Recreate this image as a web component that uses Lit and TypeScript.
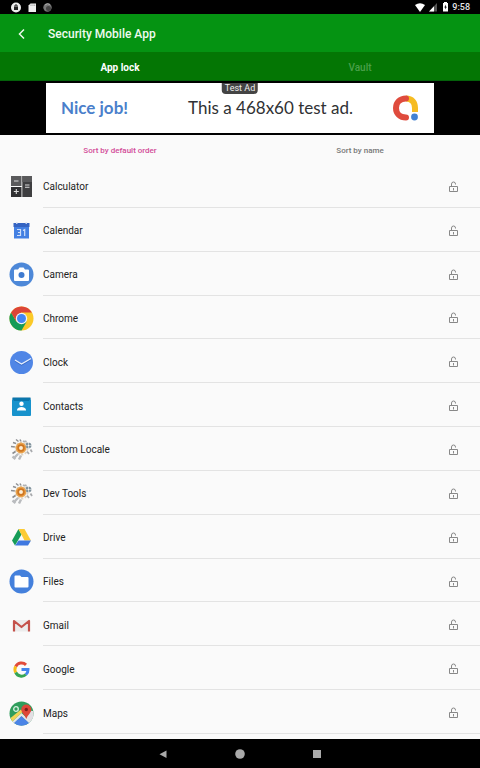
import { LitElement, html, svg, css } from "lit";
import { customElement, property, state } from "lit/decorators.js";
import { classMap } from "lit/directives/class-map.js";

const gears = svg`
  <g fill="none">
    <path d="M4 5.500 7 6.500M7 2.500l2.500 2M11 2.500l1 2M2 9.500l4 .5" stroke="#8d8f92" stroke-width="1.500"/>
    <path d="M14 4c1.500 1 2 1 3.500 0M17 6l2 1" stroke="#b0b2b4" stroke-width="1.700"/>
    <circle cx="12.500" cy="11.500" r="6" stroke="#dcd4c6" stroke-width="2" stroke-dasharray="2.200 1.500"/>
    <circle cx="12" cy="11" r="3.400" stroke="#eaa24c" stroke-width="4"/>
    <circle cx="12" cy="11" r="3" stroke="#cc7420" stroke-width="1.400"/>
    <circle cx="19.500" cy="8.500" r="2" stroke="#7f929c" stroke-width="2.200" stroke-dasharray="2.200 .7"/>
    <path d="M21.500 12.500l1.500 2.500M18 14.500l2 2.500" stroke="#a9abae" stroke-width="1.800"/>
    <path d="M9 17 5.500 20.500M3.500 19.500l3 2.500M12 18.500l-2 4" stroke="#b9bbbe" stroke-width="2.400"/>
    <path d="M6.500 14.500l-3 2" stroke="#8b8d90" stroke-width="1.600"/>
  </g>
  <circle cx="12" cy="11" r="1.700" fill="#fbeed8"/>`;

const icons = {
  Calculator: svg`
    <path fill="#5a5a5c" d="M2 2h10.500v10H2z"/><path fill="#303032" d="M2 13h10.500v10H2z"/>
    <path fill="#3e3e40" d="M13.300 2H23v21h-9.700z"/><path fill="#59595b" d="M13.300 2H23v6h-9.700z"/>
    <path stroke="#dcdcdc" stroke-width="1.100" d="M5 7h4.500M4.800 17.500h5M7.300 15v5M16 11h4.500M16 13.300h4.500"/>`,
  Calendar: svg`
    <path fill="#4480e2" d="M5 8h15v12.500H5z"/><path fill="#3564c2" d="M4.500 5h16v4h-16z"/>
    <path fill="#bfd0ef" d="M7 4.500h1.500V6H7zM16.500 4.500H18V6h-1.500z"/>
    <path fill="none" stroke="#cfdffa" stroke-width="1.200" d="M8 11.500h3.500v6H8M9 14.500h2.500M14 12.500l1.700-1v6.500"/>`,
  Camera: svg`
    <circle cx="12.500" cy="12.500" r="12" fill="#4d88d8"/>
    <path fill="#fff" d="M6 7.500h3l1.500-2h4l1.500 2h3q1 0 1 1V18q0 1-1 1H6q-1 0-1-1V8.500q0-1 1-1z"/>
    <circle cx="12.500" cy="13" r="3" fill="#3f7bd0"/>`,
  Chrome: svg`
    <circle cx="12.500" cy="12.500" r="12" fill="#fbc928"/>
    <path fill="#159b58" d="M2.100 6.500a12 12 0 0 0 10.400 18l5.200-9-10.400 0z"/>
    <path fill="#dc4437" d="M2.100 6.500a12 12 0 0 1 20.800 0H12.500L7.300 15.500z"/>
    <circle cx="12.500" cy="12.500" r="5.700" fill="#f4f4f4"/><circle cx="12.500" cy="12.500" r="4.500" fill="#4285f4"/>`,
  Clock: svg`
    <circle cx="12.500" cy="12.500" r="11.500" fill="#5086e6"/>
    <path fill="none" stroke="#3a6bc6" stroke-width="1.400" d="M6 11l6.500 4L22 9.500"/>
    <path fill="none" stroke="#e6effc" stroke-width="1.400" d="M6 10l6.500 4L22 8.500"/>`,
  Contacts: svg`
    <path fill="#0c6fa5" d="M3.500 3.500h18v4h-18z"/>
    <path fill="#1792cc" d="M3 5.500h19v15.500q0 1-1 1H4q-1 0-1-1z"/>
    <path fill="#0b76ac" d="M3.500 4h18l-1.500 3H5z"/>
    <circle cx="12.500" cy="9.800" r="2.200" fill="#fff"/><path fill="#fff" d="M8 16.500v-1Q9 13 12.500 13t4.500 2.500v1z"/>`,
  "Custom Locale": gears,
  "Dev Tools": gears,
  Drive: svg`
    <path fill="#169c58" d="M9.500 4 3 15.500l3 5 6.500-11z"/>
    <path fill="#fccb35" d="M9.500 4h6L22 15.500h-6.500z"/>
    <path fill="#3f78e0" d="M9.500 15.500H22l-3 5H6.200z"/>`,
  Files: svg`
    <circle cx="12.500" cy="12.500" r="12" fill="#4480dc"/>
    <path fill="#fff" d="M6.500 6.500h4.500l1.500 1.500h6q1 0 1 1v8.500q0 1-1 1h-12q-1 0-1-1v-10q0-1 1-1z"/>`,
  Gmail: svg`
    <path fill="#ececec" d="M5 7h15v11.500H5z"/>
    <path fill="none" stroke="#c4524b" stroke-width="2.200" stroke-linejoin="round" d="M5 18.500V8l7.500 6L20 8v10.500"/>`,
  Google: svg`
    <g fill="none" stroke-width="3">
      <path stroke="#e14b3b" d="M6.700 9.500A6.500 6.500 0 0 1 17 7.800"/>
      <path stroke="#f7bd19" d="M6.700 9.500a6.500 6.500 0 0 0 0 6"/>
      <path stroke="#35a554" d="M6.700 15.500a6.500 6.500 0 0 0 10.200 2"/>
      <path stroke="#4384ee" d="M12.500 12.500h6.500a6.500 6.500 0 0 1-2.100 5"/>
    </g>`,
  Maps: svg`
    <circle cx="12.500" cy="12.500" r="12" fill="#2f9d5c"/>
    <path fill="#e3dfe4" d="M14 9l10.200 1a12 12 0 0 1-4.500 12.100z"/>
    <path fill="#f2d355" d="M1.500 17 12 8.500l2 2L3.500 20.500z"/>
    <path fill="#e6e6e4" d="M3.500 20.500 12.500 12l9 8.500-2 1.500-7-6.500-7.500 7z"/>
    <path fill="#4b84e6" d="M5 22l7.500-7 7.500 7a12 12 0 0 1-15 0z"/>
    <circle cx="7" cy="8" r="2.300" fill="none" stroke="#d7efdf" stroke-width="1.300"/>
    <path fill="#dd4638" d="M17.300 3.500a5 5 0 0 1 5 5c0 3.500-3.500 5-5 9.500-1.500-4.500-5-6-5-9.500a5 5 0 0 1 5-5z"/>
    <circle cx="17.300" cy="8.500" r="1.700" fill="#7c1f1a"/>`,
};

@customElement("app-row")
class AppRow extends LitElement {
  @property() name: keyof typeof icons = "Calculator";
  @state() private locked = false;

  static styles = css`
    :host { display: flex; align-items: stretch; padding-left: 9px; gap: 9px; min-height: 40px; }
    .icon { width: 25px; height: 25px; margin-top: 2px; align-self: center; flex: none; }
    .body { flex: 1; display: flex; align-items: center; justify-content: space-between; border-bottom: 1px solid #e3e3e3; padding-right: 20px; padding-top: 4px; }
    .name { font-size: 10px; line-height: 14px; color: #222; }
    button { display: flex; padding: 0; border: 0; background: none; cursor: pointer; }
    .lock { width: 13px; height: 13px; }
  `;

  render() {
    return html`
      <svg class="icon" viewBox="0 0 25 25" aria-hidden="true">${icons[this.name]}</svg>
      <div class="body">
        <span class="name">${this.name}</span>
        <button aria-label="Lock ${this.name}" aria-pressed=${this.locked} @click=${() => (this.locked = !this.locked)}>
          <svg class="lock" viewBox="0 0 13 13" fill="none" stroke="#888" stroke-width="1">
            <path d="M2.500 5.500h8v5h-8zM6.500 7v2.500" />
            <path d=${this.locked ? "M4.500 5.500V3a2 2 0 0 1 4 0v2.500" : "M4.500 5.500V3a2 2 0 0 1 4 0v.5"} />
          </svg>
        </button>
      </div>`;
  }
}

@customElement("app-root")
class AppRoot extends LitElement {
  @state() private tab = 0;
  @state() private sort = 0;

  static styles = css`
    :host { display: flex; flex-direction: column; min-height: 100vh; background: #fafafa; font-family: Roboto, "Liberation Sans", sans-serif; }
    button { border: 0; padding: 0; background: none; font: inherit; cursor: pointer; }
    svg { display: block; }
    .status { height: 14px; background: #000; display: flex; align-items: center; justify-content: space-between; padding: 0 10px; color: #e8e8e8; font-size: 9px; line-height: 14px; font-weight: 500; }
    .group { display: flex; align-items: center; }
    .left { gap: 4px; }
    .right { gap: 2px; }
    .s12 { width: 12px; height: 12px; }
    .s10 { width: 10px; height: 10px; }
    .bar { height: 38px; background: #059312; display: flex; align-items: center; padding: 2px 14px 0; gap: 18px; color: #effaef; }
    .bar, .status, .tabs, .sorts, .nav, .ad { flex: none; box-sizing: border-box; }
    .back svg { width: 16px; height: 16px; }
    h1 { margin: 0; font-size: 12px; line-height: 16px; font-weight: 500; }
    .tabs, .sorts { height: 29px; display: grid; grid-template-columns: 1fr 1fr; }
    .tabs { background: #047604; font-size: 10px; font-weight: 500; padding-top: 2px; border-bottom: 1px solid #04600a; }
    .tab { color: #4aa04a; }
    .tab.on { color: #fff; font-weight: 700; }
    .ad { background: #000; padding: 2px 0; display: flex; justify-content: center; height: 54px; }
    .banner { position: relative; width: 388px; max-width: 100%; background: #fff; display: flex; align-items: center; box-sizing: border-box; padding: 0 14px 0 15px; gap: 39px; text-decoration: none; font-family: Lato, Roboto, sans-serif; font-size: 17px; line-height: 24px; color: #303134; }
    .nice { flex: 1; color: #4a7fcb; font-weight: 700; }
    .mark { width: 28px; height: 28px; }
    .badge { position: absolute; top: 0; left: 50%; transform: translateX(-50%); padding: 0 3px; border-radius: 0 0 4px 4px; background: #444; color: #eee; font: 9px/11px Roboto, sans-serif; white-space: nowrap; }
    .sorts { padding-top: 2px; }
    .sort { color: #777; font-size: 8px; font-weight: 500; }
    .sort.on { color: #d24a98; }
    .apps { flex: 1; display: grid; grid-auto-rows: 1fr; padding-bottom: 5px; }
    .nav { height: 29px; background: #000; display: flex; align-items: center; justify-content: center; gap: 65px; }
    .nav svg { width: 12px; height: 12px; fill: #aaa; }
  `;

  render() {
    return html`
      <div class="status">
        <div class="group left">
          <svg class="s12" viewBox="0 0 12 12"><circle cx="6" cy="6.500" r="5" fill="#eee"/><path fill="#222" d="M4 5.500h4V9H4z"/><path fill="none" stroke="#222" d="M5 5.500V4h2v1.500"/></svg>
          <svg class="s12" viewBox="0 0 12 12"><path fill="#eee" d="M4.500 2.500H10V11H2.500V4.500z"/><path stroke="#777" d="M5 3.500V5M7 3.500V5M8.700 3.500V5" stroke-width=".6"/></svg>
          <svg class="s12" viewBox="0 0 12 12"><circle cx="5.500" cy="6.500" r="4.200" fill="#777"/><circle cx="6.500" cy="7.500" r="2.500" fill="#444"/><path fill="none" stroke="#aaa" d="M3 4a4 4 0 0 1 5-.5"/></svg>
        </div>
        <div class="group right">
          <svg class="s12" viewBox="0 0 12 12"><path fill="#fff" d="M1 4q5-3.500 10 0l-5 7z"/></svg>
          <svg class="s10" viewBox="0 0 10 10"><path fill="#555" d="M9 1v8.500H1z"/><path fill="#fff" d="M6 4.200v5.300H1z"/></svg>
          <svg class="s10" viewBox="0 0 10 10"><path fill="#fff" d="M4 0h3v1h1v8.500H3V1h1z"/><path fill="#000" d="M5.800 2.500 4.300 5.500h1v2L6.800 4.700h-1z"/></svg>
          <span>9:58</span>
        </div>
      </div>
      <header class="bar">
        <button class="back" aria-label="Back"><svg viewBox="0 0 16 16"><path fill="none" stroke="#effaef" stroke-width="1.500" d="M10 3.500 5.500 8l4.500 4.500"/></svg></button>
        <h1>Security Mobile App</h1>
      </header>
      <div class="tabs">
        ${["App lock", "Vault"].map((t, i) => html`<button class=${classMap({ tab: true, on: this.tab === i })} @click=${() => (this.tab = i)}>${t}</button>`)}
      </div>
      <div class="ad">
        <a class="banner" href="#">
          <span class="badge">Test Ad</span>
          <span class="nice">Nice job!</span>
          <span>This a 468x60 test ad.</span>
          <svg class="mark" viewBox="0 0 28 28" fill="none" stroke-width="6" stroke-linecap="round">
            <path stroke="#f6bc22" d="M14 4.500c6 0 9 4 9 9.500v4" stroke-linecap="butt"/>
            <path stroke="#df4b3d" d="M14 4.500c-6 0-10 4-10 9.500s4 9.500 10 9.500"/>
            <circle cx="22.500" cy="23" r="3.400" fill="#4382d2"/>
          </svg>
        </a>
      </div>
      <div class="sorts">
        ${["Sort by default order", "Sort by name"].map((t, i) => html`<button class=${classMap({ sort: true, on: this.sort === i })} @click=${() => (this.sort = i)}>${t}</button>`)}
      </div>
      <main class="apps">${Object.keys(icons).map((n) => html`<app-row .name=${n as keyof typeof icons}></app-row>`)}</main>
      <nav class="nav">
        <button aria-label="Back"><svg viewBox="0 0 12 12"><path d="M9.500 2.500v7.500L2.500 6.200z"/></svg></button>
        <button aria-label="Home"><svg viewBox="0 0 12 12"><circle cx="6" cy="6" r="4.800"/></svg></button>
        <button aria-label="Recent apps"><svg viewBox="0 0 12 12"><path d="M2 2h8v8H2z"/></svg></button>
      </nav>`;
  }
}
